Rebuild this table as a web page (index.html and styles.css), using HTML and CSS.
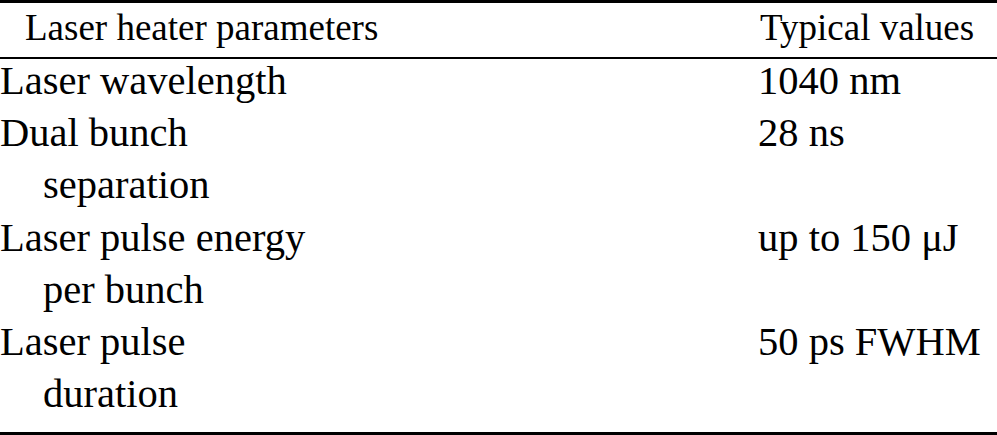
FILE: index.html
```html
<!DOCTYPE html>
<html>
<head>
<meta charset="utf-8">
<link rel="stylesheet" href="styles.css">
</head>
<body>
<div class="table">
  <div class="head">
    <div class="hcell first">Laser heater parameters</div>
    <div class="hcell">Typical values</div>
  </div>
  <div class="rows">
    <div class="row">
      <div class="name">Laser wavelength</div>
      <div class="value">1040 nm</div>
    </div>
    <div class="row">
      <div class="name">Dual bunch<br>separation</div>
      <div class="value">28 ns</div>
    </div>
    <div class="row">
      <div class="name">Laser pulse energy<br>per bunch</div>
      <div class="value">up to 150 μJ</div>
    </div>
    <div class="row">
      <div class="name">Laser pulse<br>duration</div>
      <div class="value">50 ps FWHM</div>
    </div>
  </div>
</div>
</body>
</html>
```
FILE: styles.css
```css
html, body {
  margin: 0;
  padding: 0;
  background: #fff;
}
body {
  font-family: "Liberation Serif", "Times New Roman", serif;
  color: #000;
}
.table {
  width: 997px;
  border-top: 3px solid #000;
  border-bottom: 3px solid #000;
}
.head {
  display: grid;
  grid-template-columns: 758px 1fr;
  font-size: 37px;
  line-height: 50px;
  padding-bottom: 4px;
  border-bottom: 2px solid #000;
}
.hcell.first {
  padding-left: 25px;
}
.hcell {
  padding-left: 2px;
  white-space: nowrap;
}
.rows {
  margin-top: -4px;
  padding-bottom: 12px;
  font-size: 40.5px;
  line-height: 52.2px;
}
.row {
  display: grid;
  grid-template-columns: 758px 1fr;
}
.name {
  padding-left: 43px;
  text-indent: -43px;
  white-space: nowrap;
}
.value {
  white-space: nowrap;
}
```
